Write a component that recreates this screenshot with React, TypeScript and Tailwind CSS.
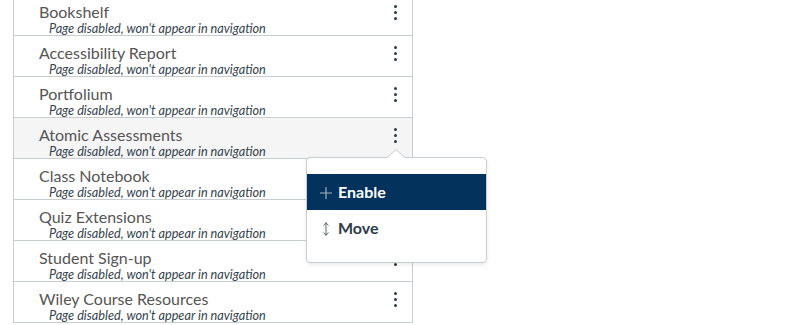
import React from 'react';

const pages = [
  'Bookshelf',
  'Accessibility Report',
  'Portfolium',
  'Atomic Assessments',
  'Class Notebook',
  'Quiz Extensions',
  'Student Sign-up',
  'Wiley Course Resources',
];

const Kebab: React.FC = () => (
  <div className="flex w-[3px] flex-col gap-[3px]">
    <span className="h-[3px] w-[3px] rounded-full bg-[#2d3b45]" />
    <span className="h-[3px] w-[3px] rounded-full bg-[#2d3b45]" />
    <span className="h-[3px] w-[3px] rounded-full bg-[#2d3b45]" />
  </div>
);

const NavRow: React.FC<{ title: string; active?: boolean }> = ({ title, active }) => (
  <li
    className={`relative flex h-[41px] items-start border-b border-[#c7cdd1] pl-[25px] pr-[15px] ${
      active ? 'bg-[#f5f5f5]' : 'bg-white'
    }`}
  >
    <div className="flex-1 pt-[9px]">
      <div className="text-base leading-4 text-[#555555]">{title}</div>
      <div className="ml-[10px] mt-[1px] text-[12.7px] italic leading-[14px] text-[#34434d]">
        Page disabled, won't appear in navigation
      </div>
    </div>
    <div className="pt-[10px]">
      <Kebab />
    </div>
  </li>
);

const PopMenu: React.FC = () => (
  <div className="absolute left-[306px] top-[157px] z-10 w-[181px] rounded-[4px] border border-[#c7cdd1] bg-white py-4 shadow-[0_2px_4px_rgba(0,0,0,0.08)]">
    <svg
      className="absolute left-[79px] top-[-9px]"
      width="20"
      height="10"
      viewBox="0 0 20 10"
    >
      <path d="M0 9.5 L10 0.5 L20 9.5" fill="white" stroke="#c7cdd1" strokeWidth="1" />
      <rect x="0" y="9" width="20" height="2" fill="white" />
    </svg>
    <div className="flex h-9 items-center gap-[5px] bg-[#03325d] pl-[12px] text-base font-bold text-white">
      <svg width="14" height="14" viewBox="0 0 14 14" className="mt-[1px]">
        <path d="M7 1 V13 M1 7 H13" stroke="#9fb0c2" strokeWidth="1.2" />
      </svg>
      <span>Enable</span>
    </div>
    <div className="flex h-9 items-center gap-[5px] pl-[12px] text-base font-bold text-[#2d3b45]">
      <svg width="14" height="16" viewBox="0 0 14 16" className="mt-[1px]">
        <path
          d="M7 2 V14 M4.5 4.5 Q6 3.5 7 1.5 Q8 3.5 9.5 4.5 M4.5 11.5 Q6 12.5 7 14.5 Q8 12.5 9.5 11.5"
          fill="none"
          stroke="#5b6770"
          strokeWidth="1"
        />
      </svg>
      <span>Move</span>
    </div>
  </div>
);

export default function App() {
  return (
    <div
      className="relative h-[325px] w-[789px] overflow-hidden bg-white"
      style={{ fontFamily: 'Lato, "Noto Sans", sans-serif' }}
    >
      <ul className="ml-[13px] mt-[-5px] w-[400px] border-x border-[#c7cdd1]">
        {pages.map((p) => (
          <NavRow key={p} title={p} active={p === 'Atomic Assessments'} />
        ))}
      </ul>
      <PopMenu />
    </div>
  );
}
